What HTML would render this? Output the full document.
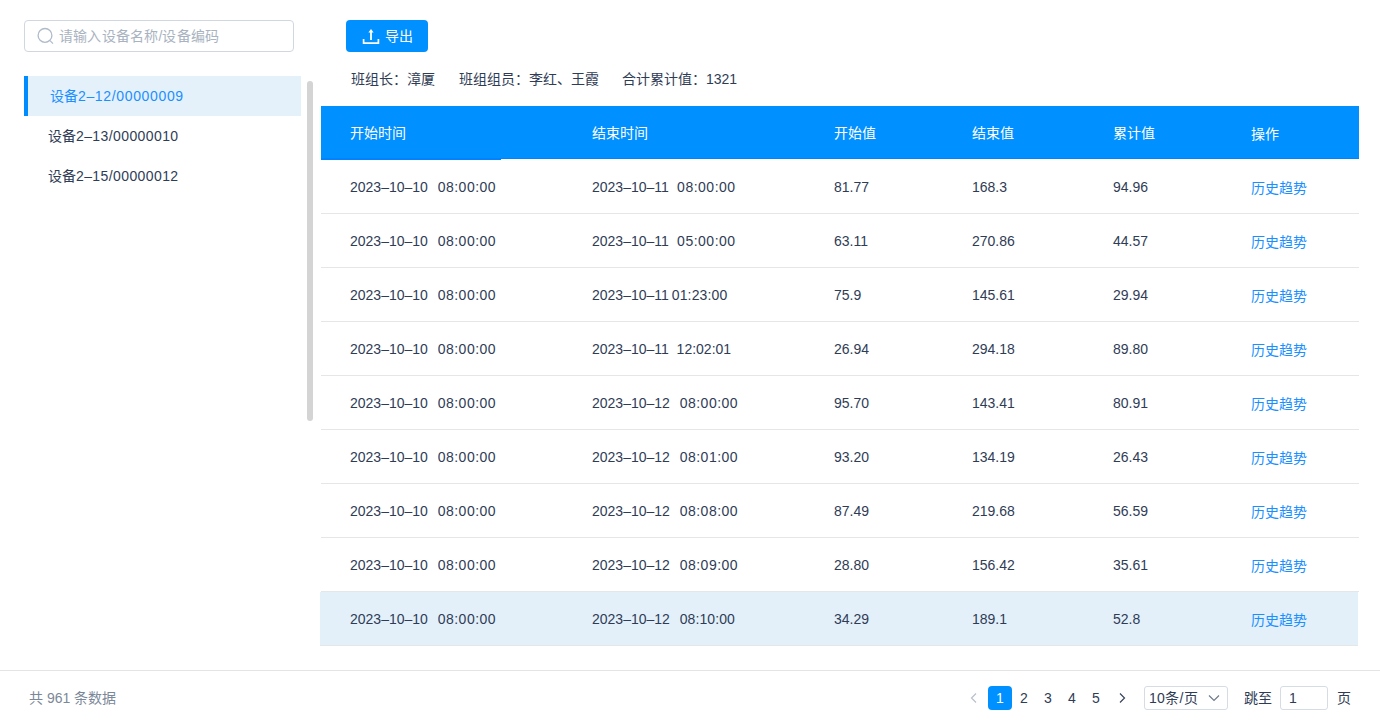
<!DOCTYPE html>
<html lang="zh-CN"><head><meta charset="utf-8">
<style>
*{margin:0;padding:0;box-sizing:border-box}
html,body{width:1380px;height:726px;overflow:hidden;background:#fff;font-weight:500;font-family:"Liberation Sans",sans-serif;color:#2f3c56;font-size:14px}
.abs{position:absolute}
.search{left:24px;top:20px;width:270px;height:32px;border:1px solid #d0d7e0;border-radius:4px}
.search .ph{position:absolute;left:34px;letter-spacing:0.2px;top:0;line-height:30px;color:#a9b3bf;font-size:14px;white-space:nowrap}
.item{left:24px;width:277px;height:40px;line-height:40px;font-size:14px;white-space:nowrap}
.item.sel{background:#e4f1fb;color:#1a8fff;border-left:4px solid #008cff;padding-left:22px}
.item.n{padding-left:24px;color:#2f3c56}
.ls{letter-spacing:0.65px}
.ls2{letter-spacing:0.4px}
.cl{display:inline-block;width:14px;padding-left:2px}
.sb{left:307px;top:81px;width:6px;height:340px;border-radius:3px;background:#d4d4d4}
.btn{left:346px;top:20px;width:82px;height:32px;border-radius:4px;background:#0090ff;color:#fff}
.btn span{position:absolute;left:39px;top:0;line-height:32px;font-size:14px}
.info{top:69px;line-height:20px;font-size:14px;white-space:nowrap}
.thead{left:321px;top:106px;width:1038px;height:53px;background:#0090ff;border-bottom:1px solid #0083ff}
.thead2{left:321px;top:158px;width:180px;height:2px;background:#0083ff}
.th{position:absolute;top:0;line-height:54px;color:#fff;font-size:14px;white-space:nowrap}
.row{left:321px;width:1038px;height:54px;border-bottom:1px solid #e6e6e6}
.row.hl{background:#e3f0fa;left:320px;}
.td{position:absolute;top:0;line-height:54px;font-size:14px;white-space:nowrap}
.t{letter-spacing:0.5px;margin-left:2px}
.op{color:#1a8fff}
.footer{left:0;top:670px;width:1380px;height:1px;background:#e4e4e4}
.total{left:29px;top:688px;line-height:20px;color:#7b8899;font-size:14px;white-space:nowrap}
.pg{top:686px;width:24px;height:24px;line-height:24px;text-align:center;font-size:14px;color:#2f3c56}
.pg.act{background:#0090ff;color:#fff;border-radius:4px}
.sel2{left:1144px;top:686px;width:84px;height:24px;border:1px solid #d6dce3;border-radius:3px}
.jump{left:1280px;top:686px;width:48px;height:24px;border:1px solid #d6dce3;border-radius:3px}
</style></head><body>
<div class="abs search">
  <svg class="abs" style="left:11px;top:6px" width="20" height="20" viewBox="0 0 20 20"><circle cx="9" cy="8.4" r="6.9" fill="none" stroke="#b0bbc9" stroke-width="1.3"/><line x1="14" y1="13.6" x2="17" y2="16.6" stroke="#b0bbc9" stroke-width="1.3"/></svg>
  <div class="ph">请输入设备名称/设备编码</div>
</div>
<div class="abs item sel" style="top:76px">设备<span class="ls">2–12/00000009</span></div>
<div class="abs item n" style="top:116px">设备<span class="ls2">2–13/00000010</span></div>
<div class="abs item n" style="top:156px">设备<span class="ls2">2–15/00000012</span></div>
<div class="abs sb"></div>

<div class="abs btn">
  <svg class="abs" style="left:16px;top:8px" width="18" height="18" viewBox="0 0 18 18"><path d="M1.6 11v4.1h14.8V11" fill="none" stroke="#fff" stroke-width="1.7"/><path d="M9 12V3.8" fill="none" stroke="#fff" stroke-width="1.8"/><path d="M9 1.1L11.6 4.4H6.4Z" fill="#fff"/></svg>
  <span>导出</span>
</div>
<div class="abs info" style="left:351px">班组长：漳厦</div>
<div class="abs info" style="left:459px">班组组员：李红、王霞</div>
<div class="abs info" style="left:622px">合计累计值：1321</div>

<div class="abs thead">
  <div class="th" style="left:29px">开始时间</div>
  <div class="th" style="left:271px">结束时间</div>
  <div class="th" style="left:513px">开始值</div>
  <div class="th" style="left:651px">结束值</div>
  <div class="th" style="left:792px">累计值</div>
  <div class="th" style="left:930px;top:1px">操作</div>
</div>
<div class="abs thead2"></div>
<div id="rows">
<div class="abs row" style="top:160px"><div class="td" style="left:29px">2023–10–10&nbsp;&nbsp;<span class="t">08:00:00</span></div><div class="td" style="left:271px">2023–10–11&nbsp;&nbsp;<span class="t" style="margin-left:0.5px">08:00:00</span></div><div class="td" style="left:513px">81.77</div><div class="td" style="left:651px">168.3</div><div class="td" style="left:792px">94.96</div><div class="td op" style="left:930px;top:1px">历史趋势</div></div>
<div class="abs row" style="top:214px"><div class="td" style="left:29px">2023–10–10&nbsp;&nbsp;<span class="t">08:00:00</span></div><div class="td" style="left:271px">2023–10–11&nbsp;&nbsp;<span class="t" style="margin-left:0.5px">05:00:00</span></div><div class="td" style="left:513px">63.11</div><div class="td" style="left:651px">270.86</div><div class="td" style="left:792px">44.57</div><div class="td op" style="left:930px;top:1px">历史趋势</div></div>
<div class="abs row" style="top:268px"><div class="td" style="left:29px">2023–10–10&nbsp;&nbsp;<span class="t">08:00:00</span></div><div class="td" style="left:271px">2023–10–11 <span style="letter-spacing:0.15px;margin-left:-1px">01:23:00</span></div><div class="td" style="left:513px">75.9</div><div class="td" style="left:651px">145.61</div><div class="td" style="left:792px">29.94</div><div class="td op" style="left:930px;top:1px">历史趋势</div></div>
<div class="abs row" style="top:322px"><div class="td" style="left:29px">2023–10–10&nbsp;&nbsp;<span class="t">08:00:00</span></div><div class="td" style="left:271px">2023–10–11&nbsp;&nbsp;<span style="margin-left:0">12:02:01</span></div><div class="td" style="left:513px">26.94</div><div class="td" style="left:651px">294.18</div><div class="td" style="left:792px">89.80</div><div class="td op" style="left:930px;top:1px">历史趋势</div></div>
<div class="abs row" style="top:376px"><div class="td" style="left:29px">2023–10–10&nbsp;&nbsp;<span class="t">08:00:00</span></div><div class="td" style="left:271px">2023–10–12&nbsp;&nbsp;<span class="t">08:00:00</span></div><div class="td" style="left:513px">95.70</div><div class="td" style="left:651px">143.41</div><div class="td" style="left:792px">80.91</div><div class="td op" style="left:930px;top:1px">历史趋势</div></div>
<div class="abs row" style="top:430px"><div class="td" style="left:29px">2023–10–10&nbsp;&nbsp;<span class="t">08:00:00</span></div><div class="td" style="left:271px">2023–10–12&nbsp;&nbsp;<span class="t">08:01:00</span></div><div class="td" style="left:513px">93.20</div><div class="td" style="left:651px">134.19</div><div class="td" style="left:792px">26.43</div><div class="td op" style="left:930px;top:1px">历史趋势</div></div>
<div class="abs row" style="top:484px"><div class="td" style="left:29px">2023–10–10&nbsp;&nbsp;<span class="t">08:00:00</span></div><div class="td" style="left:271px">2023–10–12&nbsp;&nbsp;<span class="t">08:08:00</span></div><div class="td" style="left:513px">87.49</div><div class="td" style="left:651px">219.68</div><div class="td" style="left:792px">56.59</div><div class="td op" style="left:930px;top:1px">历史趋势</div></div>
<div class="abs row" style="top:538px"><div class="td" style="left:29px">2023–10–10&nbsp;&nbsp;<span class="t">08:00:00</span></div><div class="td" style="left:271px">2023–10–12&nbsp;&nbsp;<span class="t">08:09:00</span></div><div class="td" style="left:513px">28.80</div><div class="td" style="left:651px">156.42</div><div class="td" style="left:792px">35.61</div><div class="td op" style="left:930px;top:1px">历史趋势</div></div>
<div class="abs row hl" style="top:592px"><div class="td" style="left:30px">2023–10–10&nbsp;&nbsp;<span class="t">08:00:00</span></div><div class="td" style="left:272px">2023–10–12&nbsp;&nbsp;<span class="t" style="letter-spacing:0.1px">08:10:00</span></div><div class="td" style="left:514px">34.29</div><div class="td" style="left:652px">189.1</div><div class="td" style="left:793px">52.8</div><div class="td op" style="left:931px;top:1px">历史趋势</div></div>
</div>

<div class="abs footer"></div>
<div class="abs total">共 961 条数据</div>
<svg class="abs" style="left:968px;top:692px" width="12" height="12" viewBox="0 0 12 12"><path d="M8 1.5L3.5 6 8 10.5" fill="none" stroke="#b8c0ca" stroke-width="1.2"/></svg>
<div class="abs pg act" style="left:988px">1</div>
<div class="abs pg" style="left:1012px">2</div>
<div class="abs pg" style="left:1036px">3</div>
<div class="abs pg" style="left:1060px">4</div>
<div class="abs pg" style="left:1084px">5</div>
<svg class="abs" style="left:1116px;top:692px" width="12" height="12" viewBox="0 0 12 12"><path d="M4 1.5L8.5 6 4 10.5" fill="none" stroke="#37455a" stroke-width="1.2"/></svg>
<div class="abs sel2"><span class="abs" style="left:4px;top:0;line-height:22px;letter-spacing:0.3px">10条/页</span>
<svg class="abs" style="left:62px;top:5px" width="14" height="12" viewBox="0 0 14 12"><path d="M2 3.5L7 8.5 12 3.5" fill="none" stroke="#6f7b8b" stroke-width="1.2"/></svg></div>
<div class="abs" style="left:1244px;top:688px;line-height:20px">跳至</div>
<div class="abs jump"><span class="abs" style="left:8px;top:0;line-height:22px">1</span></div>
<div class="abs" style="left:1337px;top:688px;line-height:20px">页</div>
</body></html>
